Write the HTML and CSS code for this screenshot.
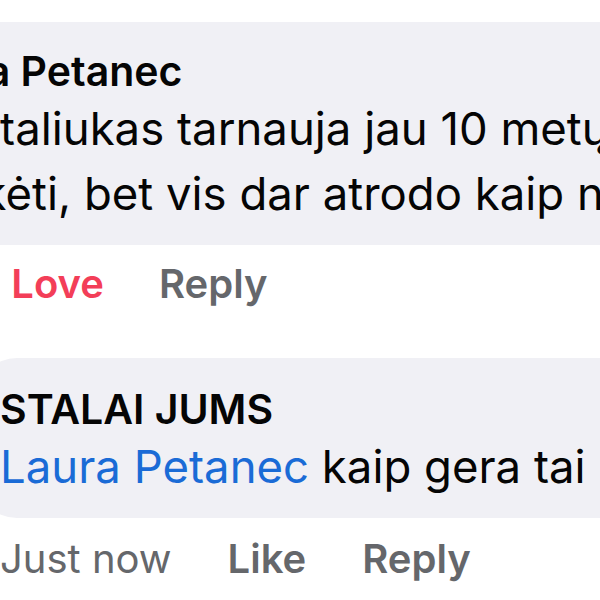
FILE: index.html
```html
<!DOCTYPE html>
<html lang="lt">
<head>
<meta charset="utf-8">
<title>Komentarai</title>
<link rel="stylesheet" href="styles.css">
</head>
<body>
<div class="thread">
  <div class="comment c1">
    <div class="bubble">
      <div class="name">Laura Petanec</div>
      <div class="text">
        <span class="line">Šis staliukas tarnauja jau 10 metų, teko</span>
        <span class="line">išlaikėti, bet vis dar atrodo kaip naujas!</span>
      </div>
    </div>
    <div class="actions">
      <span class="time">5m</span>
      <span class="act love">Love</span>
      <span class="act">Reply</span>
    </div>
  </div>
  <div class="comment c2">
    <div class="bubble">
      <div class="name">STALAI JUMS</div>
      <div class="text">
        <span class="line"><span class="mention">Laura Petanec</span> kaip gera tai girdėti!</span>
      </div>
    </div>
    <div class="actions">
      <span class="time">Just now</span>
      <span class="act">Like</span>
      <span class="act">Reply</span>
    </div>
  </div>
</div>
</body>
</html>
```
FILE: styles.css
```css
html, body {
  margin: 0;
  padding: 0;
  background: #ffffff;
  width: 600px;
  height: 600px;
  overflow: hidden;
}
body {
  font-family: Inter, "Noto Sans", sans-serif;
  color: #050505;
}
.thread {
  display: flex;
  flex-direction: column;
  padding-top: 22px;
}
.comment {
  display: flex;
  flex-direction: column;
  align-items: flex-start;
}
.c1 {
  margin-left: -124px;
}
.c2 {
  margin-left: -23px;
  margin-top: 50px;
}
.bubble {
  background: #f0f0f5;
  border-radius: 40px;
  padding: 25px 60px 19px 23px;
  width: 900px;
}
.c2 .bubble {
  padding-top: 27px;
}
.name {
  font-size: 41px;
  line-height: 48px;
  font-weight: 600;
  white-space: nowrap;
}
.text {
  margin-top: 1px;
  font-size: 45.5px;
  line-height: 65px;
  font-weight: 400;
}
.line {
  display: block;
  white-space: nowrap;
}
.mention {
  color: #1a6bd6;
}
.actions {
  display: flex;
  gap: 56px;
  margin-top: 15px;
  padding-left: 23px;
  font-size: 40px;
  line-height: 48px;
  color: #65676b;
  white-space: nowrap;
}
.c1 .actions {
  gap: 55px;
  padding-left: 21px;
}
.c2 .actions {
  margin-top: 17px;
}
.time {
  font-weight: 400;
}
.act {
  font-weight: 600;
}
.love {
  color: #f33e58;
}
```
